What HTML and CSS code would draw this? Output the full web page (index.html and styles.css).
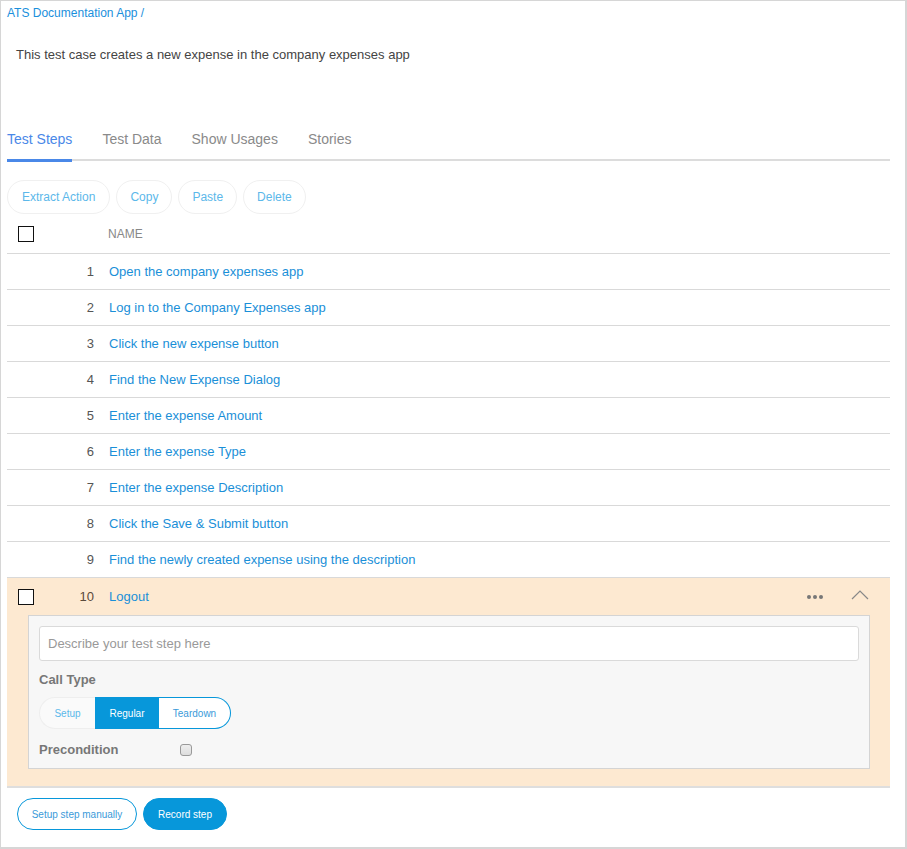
FILE: index.html
```html
<!DOCTYPE html>
<html>
<head>
<meta charset="utf-8">
<link rel="stylesheet" href="styles.css">
</head>
<body>
<div class="frame">
  <div class="crumb">ATS Documentation App /</div>
  <div class="desc">This test case creates a new expense in the company expenses app</div>
  <div class="tabs">
    <div class="tab active">Test Steps</div>
    <div class="tab">Test Data</div>
    <div class="tab">Show Usages</div>
    <div class="tab">Stories</div>
  </div>
  <div class="actions">
    <button class="pill">Extract Action</button>
    <button class="pill">Copy</button>
    <button class="pill">Paste</button>
    <button class="pill">Delete</button>
  </div>
  <div class="thead">
    <div class="chkcol"><span class="box"></span></div>
    <div class="numcol"></div>
    <div class="name-h">NAME</div>
  </div>
  <div class="row"><div class="chkcol"></div><div class="numcol">1</div><div class="name">Open the company expenses app</div></div>
  <div class="row"><div class="chkcol"></div><div class="numcol">2</div><div class="name">Log in to the Company Expenses app</div></div>
  <div class="row"><div class="chkcol"></div><div class="numcol">3</div><div class="name">Click the new expense button</div></div>
  <div class="row"><div class="chkcol"></div><div class="numcol">4</div><div class="name">Find the New Expense Dialog</div></div>
  <div class="row"><div class="chkcol"></div><div class="numcol">5</div><div class="name">Enter the expense Amount</div></div>
  <div class="row"><div class="chkcol"></div><div class="numcol">6</div><div class="name">Enter the expense Type</div></div>
  <div class="row"><div class="chkcol"></div><div class="numcol">7</div><div class="name">Enter the expense Description</div></div>
  <div class="row"><div class="chkcol"></div><div class="numcol">8</div><div class="name">Click the Save &amp; Submit button</div></div>
  <div class="row"><div class="chkcol"></div><div class="numcol">9</div><div class="name">Find the newly created expense using the description</div></div>
  <div class="expanded">
    <div class="row selrow">
      <div class="chkcol"><span class="box"></span></div>
      <div class="numcol">10</div>
      <div class="name">Logout</div>
      <div class="dots"><span></span><span></span><span></span></div>
      <svg class="chev" width="18" height="11" viewBox="0 0 18 11"><path d="M1 10 L9 2 L17 10" fill="none" stroke="#888" stroke-width="1.2"/></svg>
    </div>
    <div class="panel">
      <div class="input">Describe your test step here</div>
      <div class="label">Call Type</div>
      <div class="seg">
        <span class="seg-item first">Setup</span>
        <span class="seg-item on">Regular</span>
        <span class="seg-item last">Teardown</span>
      </div>
      <div class="precond">
        <span class="label inline">Precondition</span>
        <span class="smallbox"></span>
      </div>
    </div>
  </div>
  <div class="bottom">
    <button class="btn outline">Setup step manually</button>
    <button class="btn solid">Record step</button>
  </div>
</div>
</body>
</html>
```
FILE: styles.css
```css
* { box-sizing: border-box; }
html, body { margin: 0; padding: 0; background: #fff; }
body { font-family: "Liberation Sans", Arial, sans-serif; }
.frame {
  width: 907px;
  height: 849px;
  border: 1px solid #d6d6d6;
  border-right-width: 2px;
  border-bottom-width: 2px;
  padding: 0 15px 0 6px;
  overflow: hidden;
}
.crumb {
  color: #1a8fdc;
  font-size: 12px;
  line-height: 14px;
  padding-top: 5px;
}
.desc {
  color: #444;
  font-size: 13px;
  line-height: 16px;
  margin-top: 27px;
  padding-left: 9px;
}
.tabs {
  display: flex;
  margin-top: 62px;
  border-bottom: 2px solid #dcdcdc;
  height: 36px;
}
.tab {
  font-size: 14px;
  color: #8a8a8a;
  line-height: 17px;
  padding-top: 6px;
  margin-right: 30px;
}
.tab.active {
  color: #4a88e8;
  border-bottom: 3px solid #4a88e8;
  height: 37px;
}
.actions {
  display: flex;
  gap: 6px;
  margin-top: 19px;
  height: 34px;
}
.pill {
  font-family: inherit;
  font-size: 12px;
  color: #5cb8ea;
  background: #fff;
  border: 1px solid #f0f0f0;
  border-radius: 17px;
  padding: 0 13px;
  height: 34px;
}
.pill:first-child { padding: 0 14px; }
.thead {
  display: flex;
  align-items: center;
  height: 40px;
  border-bottom: 1px solid #d9d9d9;
}
.chkcol { width: 40px; padding-left: 11px; display: flex; align-items: center; }
.box {
  display: block;
  width: 16px;
  height: 16px;
  border: 1.5px solid #111;
  background: #fff;
}
.numcol {
  width: 47px;
  text-align: right;
  font-size: 13px;
  color: #555;
}
.name-h {
  font-size: 12px;
  color: #888;
  padding-left: 14px;
  margin-top: 1px;
}
.row {
  display: flex;
  align-items: center;
  height: 36px;
  border-bottom: 1px solid #d9d9d9;
}
.name {
  font-size: 13px;
  color: #1a8fd8;
  padding-left: 15px;
  flex: 1;
}
.expanded {
  background: #fde9d1;
  border-bottom: 2px solid #dedede;
  padding-bottom: 17px;
}
.selrow { border-bottom: none; height: 37px; }
.selrow .numcol { color: #5a4a3a; }
.dots { display: flex; gap: 2px; margin-right: 28px; }
.dots span { width: 4px; height: 4px; border-radius: 50%; background: #777; }
.chev { margin-right: 21px; margin-top: -4px; }
.panel {
  margin-left: 21px;
  margin-right: 20px;
  background: #f7f7f7;
  border: 1px solid #d4d4d4;
  padding: 10px 10px 10px 10px;
  height: 154px;
}
.input {
  height: 35px;
  background: #fff;
  border: 1px solid #dadada;
  border-radius: 3px;
  font-size: 13px;
  color: #999;
  padding: 9px 8px;
}
.label {
  font-size: 13px;
  font-weight: bold;
  color: #777;
  margin-top: 11px;
  line-height: 16px;
}
.label.inline { margin-top: 0; width: 141px; }
.seg { display: flex; margin-top: 9px; height: 32px; }
.seg-item {
  font-size: 10px;
  display: flex;
  align-items: center;
  justify-content: center;
  height: 32px;
}
.seg-item.first {
  width: 56px;
  background: #fafafa;
  color: #5cb8ea;
  border: 1px solid #eee;
  border-right: none;
  border-radius: 16px 0 0 16px;
}
.seg-item.on { width: 64px; background: #0797da; color: #fff; }
.seg-item.last {
  width: 72px;
  background: #fff;
  color: #3a9ad9;
  border: 1px solid #0797da;
  border-left: none;
  border-radius: 0 16px 16px 0;
}
.precond { display: flex; align-items: center; margin-top: 13px; }
.smallbox {
  width: 12px;
  height: 12px;
  border: 1px solid #999;
  border-radius: 3px;
  background: linear-gradient(#eee, #ddd);
}
.bottom { display: flex; gap: 6px; margin-top: 10px; padding-left: 10px; }
.btn {
  font-family: inherit;
  font-size: 10px;
  height: 32px;
  border-radius: 16px;
  padding: 0;
  white-space: nowrap;
}
.btn.outline { background: #fff; color: #3a9ad9; border: 1px solid #0797da; width: 120px; }
.btn.solid { background: #0797da; color: #fff; border: 1px solid #0797da; width: 84px; }
```
